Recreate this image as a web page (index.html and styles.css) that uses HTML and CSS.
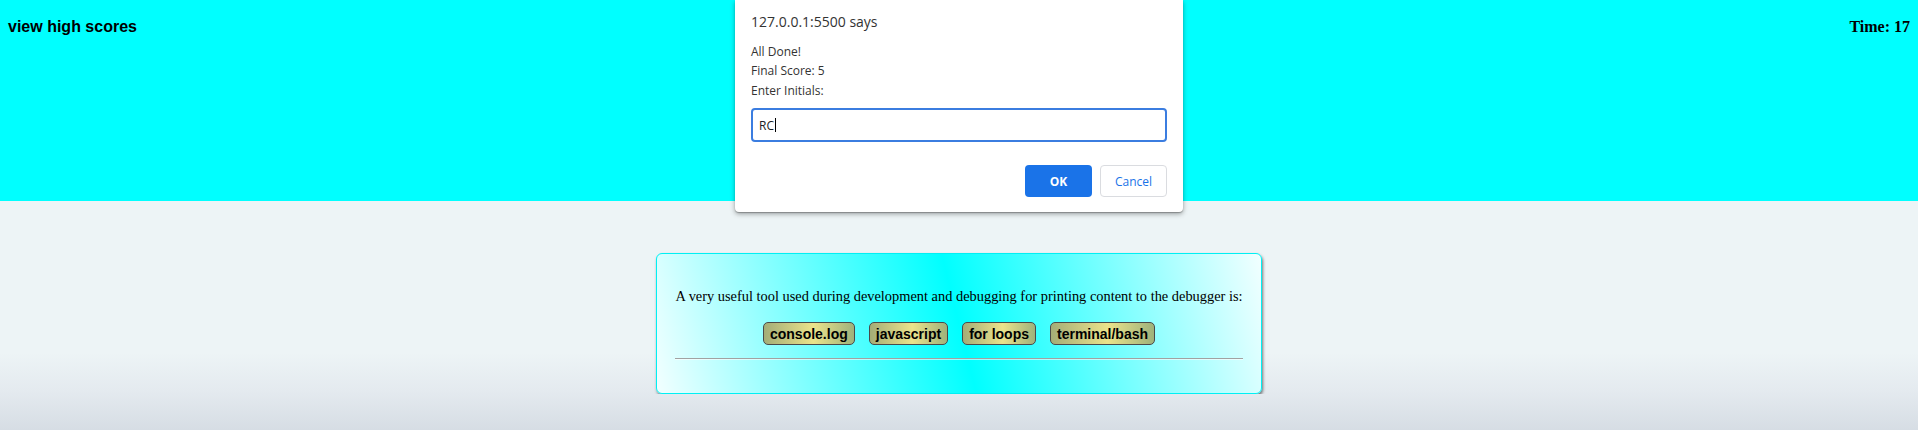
FILE: index.html
```html
<!DOCTYPE html>
<html lang="en">
<head>
<meta charset="utf-8">
<title>Code Quiz</title>
<link rel="stylesheet" href="styles.css">
</head>
<body>
<header class="topbar">
  <a class="scores-link">view high scores</a>
  <div class="timer">Time: 17</div>
</header>
<main class="quiz">
  <section class="card">
    <p class="question">A very useful tool used during development and debugging for printing content to the debugger is:</p>
    <div class="choices">
      <button class="choice">console.log</button>
      <button class="choice">javascript</button>
      <button class="choice">for loops</button>
      <button class="choice">terminal/bash</button>
    </div>
    <hr class="divider">
  </section>
</main>
<div class="prompt" role="dialog">
  <div class="prompt-title">127.0.0.1:5500 says</div>
  <div class="prompt-msg">All Done!<br>Final Score: 5<br>Enter Initials:</div>
  <div class="prompt-input">RC<span class="caret"></span></div>
  <div class="prompt-actions">
    <button class="btn-ok">OK</button>
    <button class="btn-cancel">Cancel</button>
  </div>
</div>
</body>
</html>
```
FILE: styles.css
```css
html {
  min-height: 100%;
  background: linear-gradient(to bottom, #edf4f6 0%, #edf4f6 82%, #e4eaef 91%, #d6dde4 100%);
}
body {
  margin: 0;
  font-family: "Liberation Serif", "Times New Roman", serif;
  color: #000;
}
.topbar {
  height: 201px;
  box-sizing: border-box;
  background: #00ffff;
  display: flex;
  justify-content: space-between;
  align-items: baseline;
  padding: 18px 8px 0;
}
.scores-link {
  font: bold 16px "Liberation Sans", Arial, sans-serif;
  color: #000;
}
.timer {
  font: bold 16px "Liberation Serif", "Times New Roman", serif;
}
.quiz {
  padding-top: 52px;
  display: flex;
  justify-content: center;
}
.card {
  width: 606px;
  box-sizing: border-box;
  border: 1px solid #00f0f4;
  border-radius: 6px;
  background: linear-gradient(76deg, #f2ffff 0%, #00ffff 50%, #f2ffff 100%);
  box-shadow: 1px 2px 3px rgba(0, 0, 0, 0.5);
  padding: 34px 18px 33px;
}
.question {
  margin: 0 0 17px;
  font-size: 14.4px;
  text-align: center;
  white-space: nowrap;
}
.choices {
  display: flex;
  justify-content: center;
  gap: 14px;
}
.choice {
  font: bold 14px "Liberation Sans", Arial, sans-serif;
  line-height: 16px;
  color: #000;
  padding: 2.5px 6px;
  border: 1px solid #4a4a4a;
  border-radius: 5px;
  background: linear-gradient(90deg, #a4ad77 0%, #ebe38b 55%, #9fb27b 100%);
}
.divider {
  margin: 13px 0 0;
  height: 0;
  border: 0;
  border-top: 1px solid #a2a2a2;
  border-bottom: 1px solid rgba(255, 255, 255, 0.6);
}
.prompt {
  position: absolute;
  top: 0;
  left: calc(50% - 224px);
  width: 448px;
  box-sizing: border-box;
  padding: 12px 16px 15px;
  background: #fff;
  border-radius: 0 0 4px 4px;
  box-shadow: 0 2px 5px rgba(0, 0, 0, 0.35), 0 1px 1px rgba(0, 0, 0, 0.25);
  font-family: "Open Sans", "Noto Sans", sans-serif;
  color: #333;
}
.prompt-title {
  font-size: 14px;
  line-height: 20px;
}
.prompt-msg {
  margin-top: 9.5px;
  font-size: 12px;
  line-height: 19.5px;
}
.prompt-input {
  margin-top: 8px;
  height: 34px;
  box-sizing: border-box;
  border: 2px solid #3b7de0;
  border-radius: 4px;
  padding: 0 6px;
  display: flex;
  align-items: center;
  font-size: 12px;
  color: #202124;
}
.caret {
  display: inline-block;
  width: 1px;
  height: 14px;
  margin-left: 1px;
  background: #000;
}
.prompt-actions {
  margin-top: 23px;
  display: flex;
  justify-content: flex-end;
  gap: 8px;
}
.prompt-actions button {
  width: 67px;
  height: 32px;
  border-radius: 4px;
  font-family: "Open Sans", "Noto Sans", sans-serif;
  font-size: 12px;
}
.btn-ok {
  background: #1a73e8;
  color: #fff;
  border: 0;
  font-weight: 700;
}
.btn-cancel {
  background: #fff;
  color: #1a73e8;
  border: 1px solid #dadce0;
  font-weight: 400;
}
```
